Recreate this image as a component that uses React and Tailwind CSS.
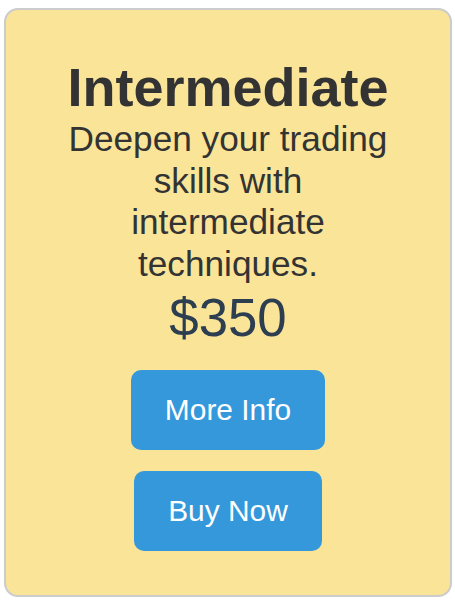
export default function App() {
  return (
    <div className="pt-[8px] pl-[4px] font-['Liberation_Sans',Arial,sans-serif]">
      <div className="w-[448px] rounded-[14px] border-2 border-[#cccccc] bg-[#f9e498] px-[50px] pt-[46px] pb-[44px] text-center">
        <h2 className="text-[54px] font-bold leading-[normal] text-[#333333]">Intermediate</h2>
        <p className="text-[35.2px] leading-[41.5px] text-[#333333]">
          Deepen your trading skills with intermediate techniques.
        </p>
        <p className="mt-[3px] text-[52.8px] leading-[normal] text-[#2c3e50]">$350</p>
        <div className="mt-[22px] flex flex-col items-center gap-[21px]">
          <button className="rounded-[10px] bg-[#3498db] px-[34px] py-[23px] text-[29.9px] leading-[normal] text-white">
            More Info
          </button>
          <button className="rounded-[10px] bg-[#3498db] px-[34px] py-[23px] text-[29.9px] leading-[normal] text-white">
            Buy Now
          </button>
        </div>
      </div>
    </div>
  );
}
